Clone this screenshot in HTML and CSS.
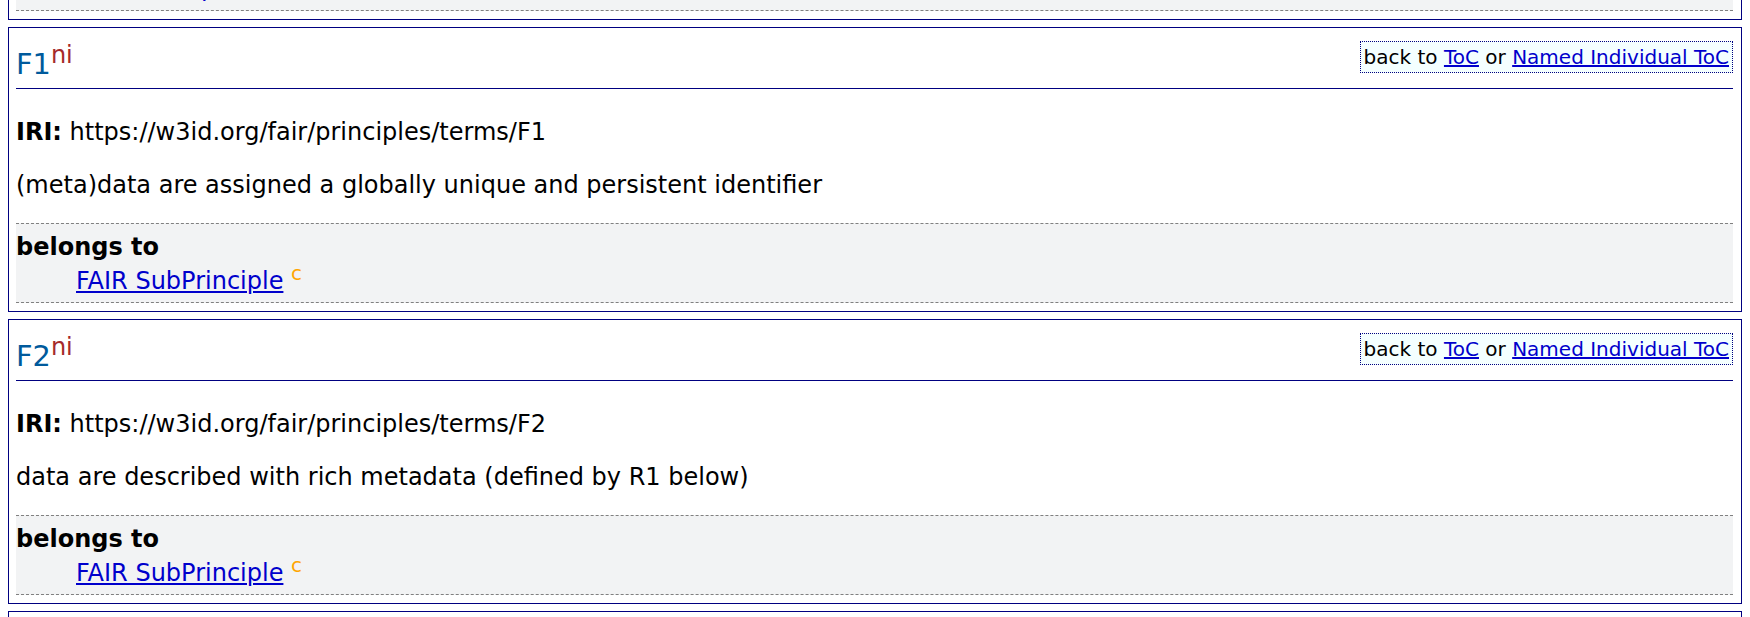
FILE: index.html
```html
<!DOCTYPE html>
<html lang="en">
<head>
<meta charset="utf-8">
<title>FAIR Principles - Named Individuals</title>
<link rel="stylesheet" href="styles.css">
</head>
<body>
<div class="page">
  <div class="entity entity-tail" id="F">
    <dl class="description">
      <dt>belongs to</dt>
      <dd><a href="#FAIRPrinciple">FAIR Principle</a> <sup class="type-c" title="class">c</sup></dd>
    </dl>
  </div>
  <div class="entity" id="F1">
    <h3><span class="backlink">back to <a href="#toc">ToC</a> or <a href="#namedindividuals">Named Individual ToC</a></span>F1<sup class="type-ni" title="named individual">ni</sup></h3>
    <p class="iri"><strong>IRI:</strong> https://w3id.org/fair/principles/terms/F1</p>
    <div class="comment"><p>(meta)data are assigned a globally unique and persistent identifier</p></div>
    <dl class="description">
      <dt>belongs to</dt>
      <dd><a href="#FAIRSubPrinciple">FAIR SubPrinciple</a> <sup class="type-c" title="class">c</sup></dd>
    </dl>
  </div>
  <div class="entity" id="F2">
    <h3><span class="backlink">back to <a href="#toc">ToC</a> or <a href="#namedindividuals">Named Individual ToC</a></span>F2<sup class="type-ni" title="named individual">ni</sup></h3>
    <p class="iri"><strong>IRI:</strong> https://w3id.org/fair/principles/terms/F2</p>
    <div class="comment"><p>data are described with rich metadata (defined by R1 below)</p></div>
    <dl class="description">
      <dt>belongs to</dt>
      <dd><a href="#FAIRSubPrinciple">FAIR SubPrinciple</a> <sup class="type-c" title="class">c</sup></dd>
    </dl>
  </div>
  <div class="entity" id="F3">
    <h3><span class="backlink">back to <a href="#toc">ToC</a> or <a href="#namedindividuals">Named Individual ToC</a></span>F3<sup class="type-ni" title="named individual">ni</sup></h3>
    <p class="iri"><strong>IRI:</strong> https://w3id.org/fair/principles/terms/F3</p>
    <div class="comment"><p>metadata clearly and explicitly include the identifier of the data it describes</p></div>
    <dl class="description">
      <dt>belongs to</dt>
      <dd><a href="#FAIRSubPrinciple">FAIR SubPrinciple</a> <sup class="type-c" title="class">c</sup></dd>
    </dl>
  </div>
</div>
</body>
</html>
```

FILE: styles.css
```css
html, body {
  margin: 0;
  padding: 0;
  background: #ffffff;
}

body {
  padding: 0 8px;
  font-family: "DejaVu Sans", Verdana, sans-serif;
  font-size: 24px;
  color: #000000;
}

.page {
  display: flow-root;
  margin-top: -86px;
}

.entity {
  border: 1px solid #000080;
  padding: 7.5px 8px 7.5px 7px;
  margin: 7.5px 0;
}

.entity-tail .description {
  margin-top: 0;
  padding-bottom: 8.5px;
}

.entity h3 {
  margin: 5px 0 29px;
  padding: 0 0 8px;
  font-size: 28.8px;
  font-weight: normal;
  color: #005a9c;
  border-bottom: 1px solid #000080;
}

.type-ni {
  color: #a52a2a;
}

.backlink {
  float: right;
  font-size: 20px;
  color: #000000;
  padding: 3px;
  border: 1px dotted #000080;
  background: #f4ffff;
}

a {
  color: #0000cc;
}

p {
  margin: 0;
}

.iri {
  margin: 24px 0 25px;
}

.comment p {
  margin: 0;
}

.description {
  margin: 24px 0 0;
  padding: 8.5px 0 7.5px;
  border-top: 1px dashed #808080;
  border-bottom: 1px dashed #808080;
  background: #f2f3f4;
}

.description dt {
  font-weight: bold;
}

.description dd {
  margin: 0 0 0 60px;
}

.type-c {
  color: #ffa500;
  font-size: smaller;
}
```
